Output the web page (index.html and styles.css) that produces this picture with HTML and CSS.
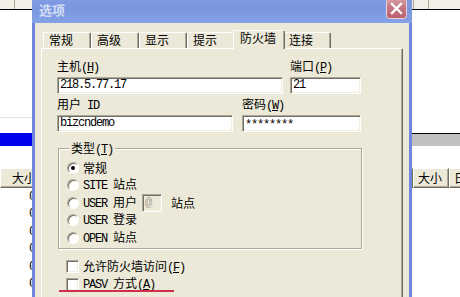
FILE: index.html
```html
<!DOCTYPE html>
<html lang="zh-CN">
<head>
<meta charset="utf-8">
<title>选项</title>
<link rel="stylesheet" href="styles.css">
</head>
<body>
<div class="desktop">
  <div class="app">
    <section class="pane pane-left">
      <div class="colbar"><span class="cb cb-l1"></span></div>
      <div class="list-top"><div class="faint"></div></div>
      <div class="sel-row"></div>
      <div class="gap"></div>
      <div class="colhead"><span class="ch ch-size-l">大小</span><span class="ch ch-rest"></span></div>
      <div class="rows">
        <div class="row"><span class="num a">0</span></div>
        <div class="row"><span class="num a">0</span></div>
        <div class="row"><span class="num a">0</span></div>
        <div class="row"><span class="num a">0</span></div>
        <div class="row"><span class="num a">0</span></div>
        <div class="row"><span class="num a">0</span></div>
      </div>
    </section>
    <section class="pane pane-right">
      <div class="colbar"><span class="cb cb-r1"></span><span class="cb cb-r2"></span></div>
      <div class="list-top"></div>
      <div class="grey-row"></div>
      <div class="gap"></div>
      <div class="colhead"><span class="ch ch-name"></span><span class="ch ch-size">大小</span><span class="ch ch-date">日</span></div>
    </section>
  </div>

  <div class="dialog">
    <div class="titlebar">
      <span class="title">选项</span>
      <span class="close">
        <svg width="21" height="21" viewBox="0 0 21 21">
          <defs>
            <linearGradient id="cg" x1="0" y1="0" x2="0" y2="1">
              <stop offset="0" stop-color="#d8a0a8"/>
              <stop offset="0.45" stop-color="#c67682"/>
              <stop offset="1" stop-color="#b9606e"/>
            </linearGradient>
          </defs>
          <rect x="0.5" y="0.5" width="20" height="20" rx="3" fill="url(#cg)" stroke="#ecd3d8"/>
          <path d="M6 6 L15 15 M15 6 L6 15" stroke="#fff" stroke-width="2.3" stroke-linecap="square" fill="none"/>
        </svg>
      </span>
    </div>
    <div class="dlg-body">
      <div class="tabs">
        <span class="tab">常规</span>
        <span class="tab">高级</span>
        <span class="tab">显示</span>
        <span class="tab">提示</span>
        <span class="tab tab-on">防火墙</span>
        <span class="tab">连接</span>
      </div>
      <div class="panel">
        <div class="frow">
          <div class="fld fld-host">
            <span class="lbl">主机<span class="a">(<u>H</u>)</span></span>
            <span class="inp a">218.5.77.17</span>
          </div>
          <div class="fld fld-port">
            <span class="lbl">端口<span class="a">(<u>P</u>)</span></span>
            <span class="inp a">21</span>
          </div>
        </div>
        <div class="frow frow2">
          <div class="fld fld-user">
            <span class="lbl">用户<span class="a"> ID</span></span>
            <span class="inp a">bizcndemo</span>
          </div>
          <div class="fld fld-pass">
            <span class="lbl">密码<span class="a">(<u>W</u>)</span></span>
            <span class="inp a"><span class="stars">********</span></span>
          </div>
        </div>

        <div class="grp">
          <div class="grp-title">类型<span class="a">(<u>T</u>)</span></div>
          <div class="opts">
            <div class="opt"><span class="radio on"></span><span>常规</span></div>
            <div class="opt"><span class="radio"></span><span><span class="a">SITE </span>站点</span></div>
            <div class="opt"><span class="radio"></span><span><span class="a">USER </span>用户</span><span class="mini a">@</span><span class="after-mini">站点</span></div>
            <div class="opt"><span class="radio"></span><span><span class="a">USER </span>登录</span></div>
            <div class="opt"><span class="radio"></span><span><span class="a">OPEN </span>站点</span></div>
          </div>
        </div>

        <div class="checks">
          <div class="chk"><span class="box"></span><span>允许防火墙访问<span class="a">(<u>F</u>)</span></span></div>
          <div class="chk pasv"><span class="box"></span><span><span class="a">PASV </span>方式<span class="a">(<u>A</u>)</span></span><span class="mark"></span></div>
        </div>
      </div>
    </div>
  </div>
</div>
</body>
</html>
```

FILE: styles.css
```css
* { box-sizing: border-box; }
html, body { margin: 0; padding: 0; }
body {
  width: 460px;
  height: 297px;
  overflow: hidden;
  background: #fff;
  color: #000;
  font: 12px/14px "Noto Sans CJK SC", sans-serif;
}
.desktop { position: relative; width: 460px; height: 297px; overflow: hidden; }

/* ---------- background application ---------- */
.app { display: flex; height: 297px; }
.pane { display: flex; flex-direction: column; }
.pane-left { width: 230px; flex: none; }
.pane-right { flex: 1; }

.colbar {
  height: 10px;
  flex: none;
  display: flex;
  background: #f1efe6;
  border-bottom: 1px solid #000;
}
.cb { height: 9px; flex: none; border-right: 1px solid #aca899; }
.cb-l1 { width: 15px; }
.cb-r1 { width: 184px; }
.cb-r2 { width: 15px; }

.list-top { height: 123px; flex: none; background: #fff; }
.faint { margin-top: 107px; height: 1px; background: #e4e4e4; }

.sel-row { height: 13px; flex: none; background: #0000ee; }
.grey-row { height: 13px; flex: none; background: #c0c0c0; border-top: 1px solid #000; }
.gap { height: 22px; flex: none; }

.colhead { height: 20px; flex: none; display: flex; }
.ch {
  height: 20px;
  flex: none;
  background: #ece9d8;
  border-top: 1px solid #fff;
  border-left: 1px solid #fff;
  border-right: 1px solid #716f64;
  border-bottom: 1px solid #716f64;
  box-shadow: inset -1px -1px 0 #aca899;
  line-height: 18px;
  white-space: nowrap;
  overflow: hidden;
}
.ch-size-l { width: 60px; padding-left: 11px; }
.ch-rest { flex: 1; }
.ch-name { width: 183px; }
.ch-size { width: 36px; padding-left: 4px; }
.ch-date { flex: 1; padding-left: 4px; }

.rows { display: flex; flex-direction: column; }
.row { height: 17.5px; display: flex; align-items: center; }
.num { width: 35px; text-align: right; }

/* ---------- ASCII runs (bitmap-like fixed width) ---------- */
.a {
  font-family: "Liberation Mono", monospace;
  font-size: 12px;
  letter-spacing: -1.2px;
}

/* ---------- dialog window ---------- */
.dialog {
  position: absolute;
  left: 32px;
  top: -7px;
  width: 380px;
  height: 330px;
  display: flex;
  flex-direction: column;
}
.titlebar {
  height: 30px;
  flex: none;
  display: flex;
  justify-content: space-between;
  align-items: flex-start;
  padding: 5px 5px 0 7px;
  background: linear-gradient(#839fe4, #7a96df 55%, #85a2e6);
}
.title {
  margin-top: 3px;
  font: bold 13px/18px "Noto Sans CJK SC", sans-serif;
  color: #d2ddf4;
}
.close { width: 21px; height: 21px; display: block; }
.close svg { display: block; }

.dlg-body {
  flex: 1;
  background: #ece9d8;
  border-left: 3px solid #7086dc;
  border-right: 3px solid #7086dc;
  padding: 7px 6px 0 6px;
  display: flex;
  flex-direction: column;
}

/* tabs */
.tabs { height: 18px; flex: none; display: flex; align-items: flex-start; padding-left: 2px; }
.tab {
  width: 48px;
  height: 16px;
  margin-top: 2px;
  flex: none;
  padding: 0 0 0 5px;
  border: 1px solid #fff;
  border-bottom: 0;
  border-right-color: #716f64;
  border-radius: 2px 2px 0 0;
  box-shadow: inset -1px 0 0 #aca899;
  background: #ece9d8;
  line-height: 14px;
  white-space: nowrap;
}
.tab-on {
  width: 52px;
  height: 19px;
  margin: 0 -2px 0 -2px;
  padding-left: 6px;
  position: relative;
  z-index: 2;
}

/* panel */
.panel {
  flex: 1;
  border-top: 1px solid #fff;
  border-left: 1px solid #fff;
  border-right: 1px solid #716f64;
  box-shadow: inset -1px 0 0 #aca899;
  padding: 10px 0 0 15px;
}

.frow { display: flex; }
.frow2 { margin-top: 3px; }
.fld { display: flex; flex-direction: column; gap: 2px; flex: none; }
.fld-host { width: 226px; margin-right: 7px; }
.fld-port { width: 71px; }
.fld-user { width: 176px; margin-right: 9px; }
.fld-pass { width: 119px; }
.lbl { line-height: 14px; white-space: nowrap; }

.inp {
  display: block;
  height: 17px;
  background: #fff;
  border: 1px solid;
  border-color: #aca899 #fff #fff #aca899;
  box-shadow: inset 1px 1px 0 #716f64, inset -1px -1px 0 #f1efe2;
  padding-left: 2px;
  line-height: 15px;
  white-space: nowrap;
  overflow: hidden;
}
.stars { vertical-align: -2px; }

/* group box */
.grp {
  margin: 16px 0 0 1px;
  width: 304px;
  height: 101px;
  border: 1px solid #aca899;
  box-shadow: 1px 1px 0 #fff, inset 1px 1px 0 #fff;
  padding-left: 8px;
}
.grp-title {
  width: fit-content;
  margin: -8px 0 0 2px;
  padding: 0 2px;
  background: #ece9d8;
  line-height: 14px;
}
.opts { padding-top: 2px; }
.opt { height: 17.5px; display: flex; align-items: center; gap: 4px; white-space: nowrap; }

.radio {
  width: 12px;
  height: 12px;
  flex: none;
  border-radius: 50%;
  border: 1px solid;
  border-color: #aca899 #fff #fff #aca899;
  box-shadow: inset 1px 1px 0 #716f64;
  background: #fff;
  display: flex;
  align-items: center;
  justify-content: center;
}
.radio.on::after {
  content: "";
  width: 4px;
  height: 4px;
  border-radius: 50%;
  background: #000;
}

.mini {
  width: 20px;
  height: 18px;
  margin-left: 1px;
  flex: none;
  border: 1px solid;
  border-color: #aca899 #fff #fff #aca899;
  box-shadow: inset 1px 1px 0 #716f64, inset -1px -1px 0 #f1efe2;
  background: #ece9d8;
  color: #aca899;
  padding-left: 2px;
  line-height: 16px;
}
.after-mini { margin-left: 5px; }

/* checkboxes */
.checks { margin-top: 9px; padding-left: 9px; }
.chk { height: 17.5px; display: flex; align-items: center; gap: 4px; white-space: nowrap; }
.box {
  width: 13px;
  height: 13px;
  flex: none;
  border: 1px solid;
  border-color: #aca899 #fff #fff #aca899;
  box-shadow: inset 1px 1px 0 #716f64, inset -1px -1px 0 #f1efe2;
  background: #fff;
}
.pasv { position: relative; }
.mark {
  position: absolute;
  left: -7px;
  top: 14.5px;
  width: 115px;
  height: 2px;
  background: #cf2f4c;
}
```
